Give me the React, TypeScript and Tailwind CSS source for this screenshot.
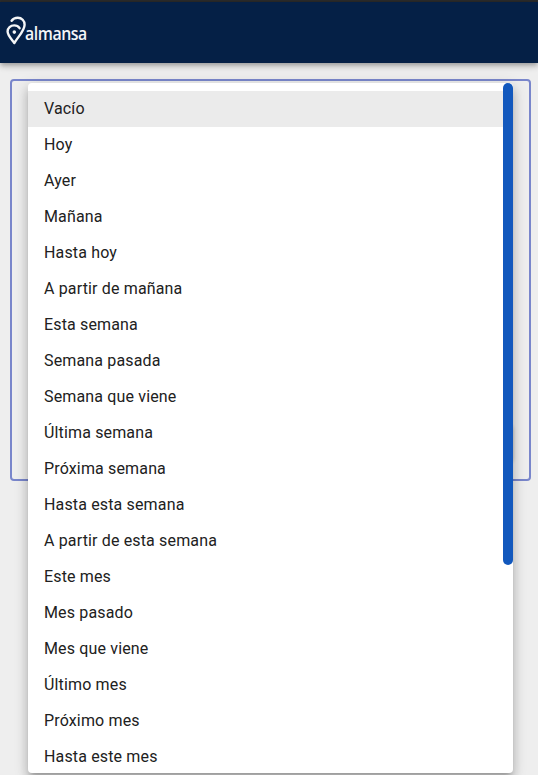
const options = [
  'Vacío', 'Hoy', 'Ayer', 'Mañana', 'Hasta hoy', 'A partir de mañana', 'Esta semana',
  'Semana pasada', 'Semana que viene', 'Última semana', 'Próxima semana',
  'Hasta esta semana', 'A partir de esta semana', 'Este mes', 'Mes pasado',
  'Mes que viene', 'Último mes', 'Próximo mes', 'Hasta este mes',
];

function Logo() {
  return (
    <div className="flex items-start text-[#f4f5f7]">
      <svg className="shrink-0" width="22" height="32" viewBox="0 0 22 32" fill="none" stroke="currentColor" strokeWidth="2.4" strokeLinecap="round" strokeLinejoin="round">
        <path d="M5.6 5.8C7 3.8 9.2 2.8 11.8 2.8C15.8 2.8 18.6 5.8 18.6 9.7C18.6 15.5 12.8 20.8 8.3 28C5.2 23.8 1.6 20.4 1.6 16.6C1.6 12.9 4.6 10.4 8.2 10.4C10.7 10.4 12.4 11.4 13.6 13.2" />
        <circle cx="8.3" cy="17.1" r="1.8" fill="currentColor" stroke="none" />
      </svg>
      <span className="-ml-[3px] mt-[7px] origin-left scale-x-[0.88] font-['Open_Sans',sans-serif] text-[18px] leading-[22px] font-semibold tracking-[-0.5px]">almansa</span>
    </div>
  );
}

function OptionsMenu() {
  return (
    <div className="absolute left-[16px] top-[2px] flex h-[690px] w-[485px] items-start overflow-hidden rounded-[4px] bg-white shadow-[0_5px_5px_-3px_rgba(0,0,0,0.2),0_8px_10px_1px_rgba(0,0,0,0.14),0_3px_14px_2px_rgba(0,0,0,0.12)]">
      <ul className="flex-1 pt-2">
        {options.map((label, i) => (
          <li key={label} className={`h-9 px-4 py-1.5 text-base leading-6 tracking-[0.15px] ${i === 0 ? 'bg-[#ebebeb]' : ''}`}>
            {label}
          </li>
        ))}
      </ul>
      <div className="h-[482px] w-[10px] rounded-full bg-[#1258bd]" />
    </div>
  );
}

export default function App() {
  return (
    <div className="flex h-[775px] w-[538px] flex-col overflow-hidden bg-[#eeeeee] font-[Roboto,sans-serif] text-[#212121]">
      <div className="h-[2px] shrink-0 bg-[#2b2b2b]" />
      <header className="flex h-[61px] shrink-0 items-start bg-[#052046] pl-[6px] pt-[13px] shadow-[0_2px_4px_-1px_rgba(0,0,0,0.2),0_4px_5px_0_rgba(0,0,0,0.14),0_1px_10px_0_rgba(0,0,0,0.12)]">
        <Logo />
      </header>
      <main className="pl-[10px] pt-4">
        <div className="relative h-[402px] w-[521px] rounded-[4px] border-2 border-[#7986cb]">
          <div className="absolute right-[16px] top-[346px] h-[34px] w-[20px] shadow-[0_0_4px_rgba(0,0,0,0.2)]" />
          <OptionsMenu />
        </div>
      </main>
    </div>
  );
}
